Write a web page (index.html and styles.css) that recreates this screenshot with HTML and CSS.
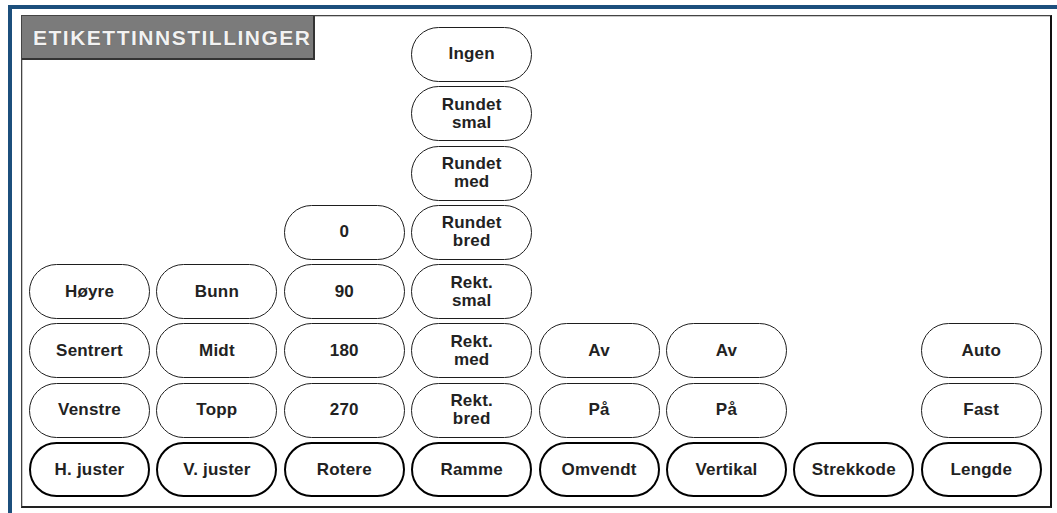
FILE: index.html
```html
<!DOCTYPE html>
<html lang="no">
<head>
    <meta charset="UTF-8">
    <meta name="viewport" content="width=device-width, initial-scale=1.0">
    <title>Etikettinnstillinger</title>
    <link rel="stylesheet" href="styles.css">
</head>
<body>

<div class="frame">
    <div class="panel">
        <h1 class="title">ETIKETTINNSTILLINGER</h1>

        <div class="columns">
            <div class="col">
                <button class="opt">Høyre</button>
                <button class="opt">Sentrert</button>
                <button class="opt">Venstre</button>
                <button class="opt main">H. juster</button>
            </div>
            <div class="col">
                <button class="opt">Bunn</button>
                <button class="opt">Midt</button>
                <button class="opt">Topp</button>
                <button class="opt main">V. juster</button>
            </div>
            <div class="col">
                <button class="opt">0</button>
                <button class="opt">90</button>
                <button class="opt">180</button>
                <button class="opt">270</button>
                <button class="opt main">Rotere</button>
            </div>
            <div class="col">
                <button class="opt">Ingen</button>
                <button class="opt">Rundet<br>smal</button>
                <button class="opt">Rundet<br>med</button>
                <button class="opt">Rundet<br>bred</button>
                <button class="opt">Rekt.<br>smal</button>
                <button class="opt">Rekt.<br>med</button>
                <button class="opt">Rekt.<br>bred</button>
                <button class="opt main">Ramme</button>
            </div>
            <div class="col">
                <button class="opt">Av</button>
                <button class="opt">På</button>
                <button class="opt main">Omvendt</button>
            </div>
            <div class="col">
                <button class="opt">Av</button>
                <button class="opt">På</button>
                <button class="opt main">Vertikal</button>
            </div>
            <div class="col">
                <button class="opt main">Strekkode</button>
            </div>
            <div class="col">
                <button class="opt">Auto</button>
                <button class="opt">Fast</button>
                <button class="opt main">Lengde</button>
            </div>
        </div>
    </div>
</div>

</body>
</html>
```

FILE: styles.css
```css
* {
    box-sizing: border-box;
    margin: 0;
    padding: 0;
}
html, body {
    height: 100%;
}
body {
    font-family: 'Liberation Sans', Arial, sans-serif;
    background-color: white;
    margin: 0;
    padding: 5px 0 0 8px;
    overflow: hidden;
}
.frame {
    height: 100%;
    border-top: 4px solid #1c4f7c;
    border-left: 4px solid #1c4f7c;
    padding: 6px 0 0 9px;
}
.panel {
    display: grid;
    width: 1031px;
    height: 493px;
    border: 1px solid #444;
    border-right: 2px solid #111;
    border-bottom: 2px solid #222;
    box-shadow: inset 1px 1px 0 #c8c8c8;
}
.title {
    grid-area: 1 / 1;
    align-self: start;
    justify-self: start;
    width: 293px;
    height: 44px;
    padding: 10px 0 0 11px;
    background-color: #7b7b7b;
    border-right: 2px solid #333;
    border-bottom: 2px solid #333;
    color: #f2f2f2;
    font-size: 21px;
    font-weight: bold;
    letter-spacing: 1.5px;
    line-height: 24px;
    white-space: nowrap;
    text-shadow: 0 0 1px #555;
}
.columns {
    grid-area: 1 / 1;
    display: grid;
    grid-template-columns: repeat(8, 121px);
    column-gap: 6.4px;
    padding: 0 0 9px 7px;
}
.col {
    display: flex;
    flex-direction: column;
    justify-content: flex-end;
    gap: 4.3px;
}
.opt {
    height: 55px;
    width: 100%;
    border: 1px solid #1e1e1e;
    border-radius: 28px;
    background-color: white;
    color: #222;
    font-family: 'Liberation Sans', Arial, sans-serif;
    font-size: 17px;
    font-weight: bold;
    letter-spacing: 0.2px;
    line-height: 18px;
    text-align: center;
}
.opt.main {
    border: 2.5px solid #000;
}
```
